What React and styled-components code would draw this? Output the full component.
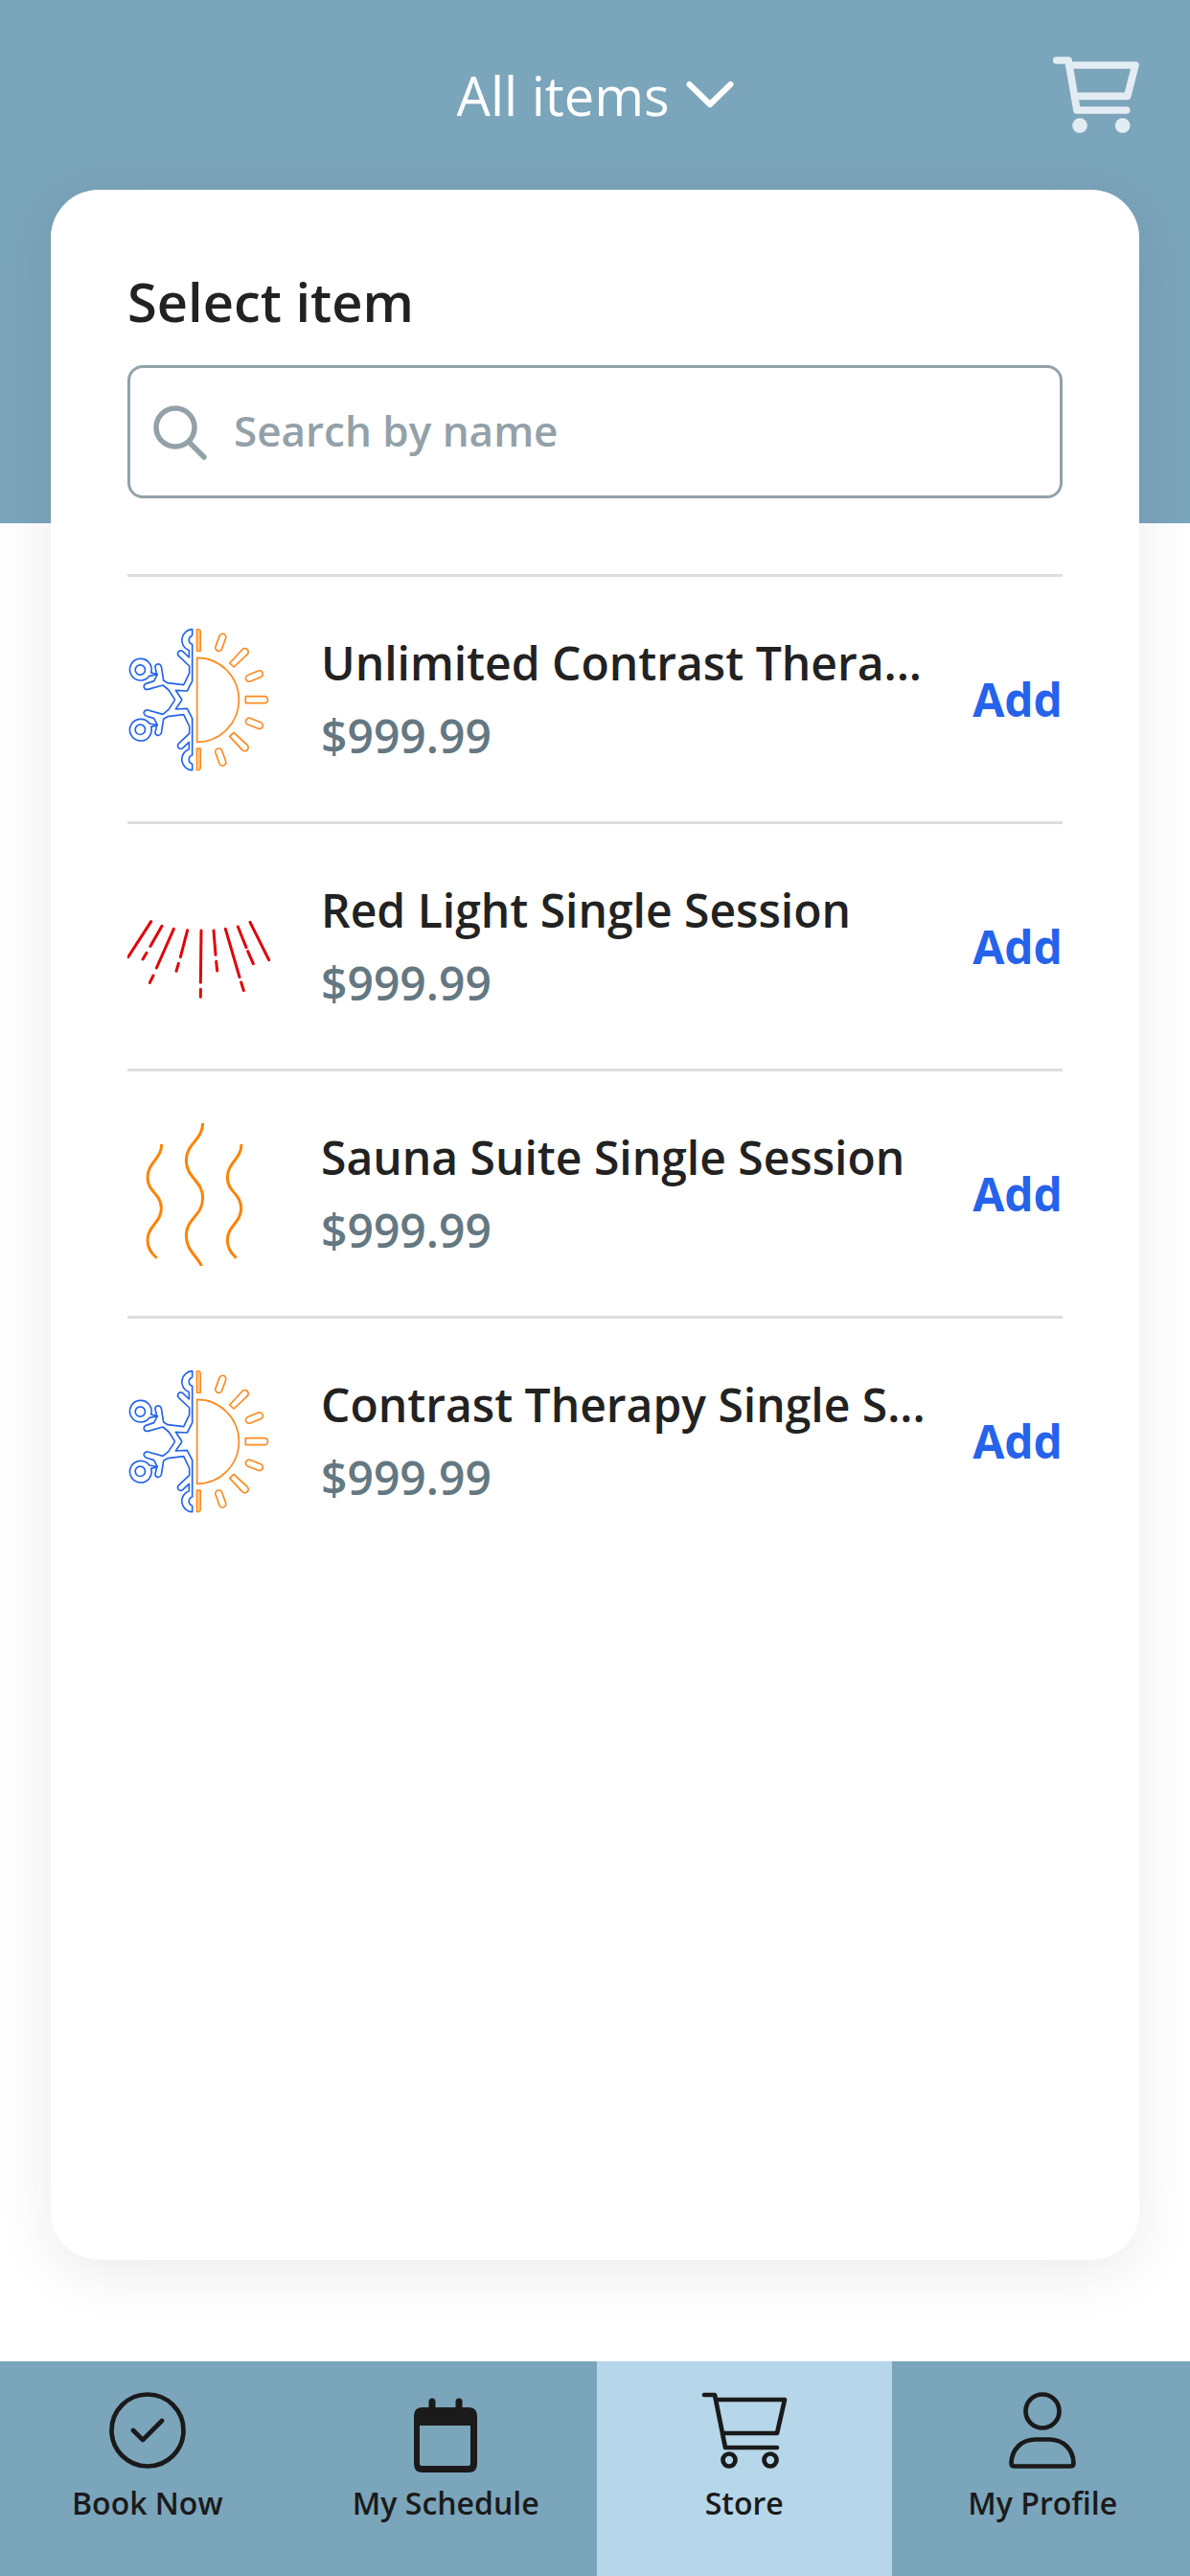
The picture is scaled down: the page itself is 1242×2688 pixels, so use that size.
import React, { useState } from "react";
import styled, { createGlobalStyle, ThemeProvider } from "styled-components";

const theme = {
  colors: {
    brand: "#7ba5bb",
    brandLight: "#b6d6e9",
    text: "#222222",
    icon: "#1a1a1a",
    muted: "#93a1a9",
    price: "#647882",
    link: "#2563eb",
    line: "#dedede"
  }
};

const GlobalStyle = createGlobalStyle`
  * {
    box-sizing: border-box;
  }
  body {
    margin: 0;
    font-family: "Open Sans", "Noto Sans", sans-serif;
    color: #222222;
  }
  button, input, select {
    font: inherit;
    color: inherit;
  }
`;

const Page = styled.div`
  display: flex;
  flex-direction: column;
  min-height: 100vh;
  background: linear-gradient(
    ${({ theme }) => theme.colors.brand} 546px,
    #ffffff 546px
  );
`;

const Header = styled.header`
  display: grid;
  grid-template-columns: 1fr auto 1fr;
  align-items: center;
  height: 198px;
  padding: 0 53px;
`;

const Filter = styled.label`
  grid-column: 2;
  display: flex;
  align-items: center;
  gap: 16px;
  color: #ffffff;
`;

const FilterSelect = styled.select`
  appearance: none;
  padding: 0;
  border: none;
  background: none;
  font-size: 56px;
  line-height: 76px;
  cursor: pointer;

  option {
    color: ${({ theme }) => theme.colors.text};
  }
`;

const CartButton = styled.button`
  justify-self: end;
  display: flex;
  padding: 0;
  border: none;
  background: none;
  color: #e4ecf3;
  cursor: pointer;
`;

const Card = styled.main`
  flex: 1;
  margin: 0 53px 106px;
  padding: 78px 80px;
  border-radius: 50px;
  background: #ffffff;
  box-shadow: 0 12px 60px rgba(30, 30, 60, 0.09);
`;

const Heading = styled.h1`
  margin: 0 0 29px;
  font-size: 56px;
  font-weight: 600;
  line-height: 76px;
`;

const SearchBox = styled.label`
  display: flex;
  align-items: center;
  gap: 28px;
  height: 139px;
  margin-bottom: 79px;
  padding: 0 24px;
  border: 3px solid ${({ theme }) => theme.colors.muted};
  border-radius: 16px;
  color: ${({ theme }) => theme.colors.muted};
`;

const SearchInput = styled.input`
  flex: 1;
  min-width: 0;
  padding: 0 0 4px;
  border: none;
  outline: none;
  background: none;
  color: ${({ theme }) => theme.colors.text};
  font-size: 44px;
  font-weight: 600;
  line-height: 64px;

  &::placeholder {
    color: ${({ theme }) => theme.colors.muted};
    opacity: 1;
  }
`;

const ItemList = styled.ul`
  margin: 0;
  padding: 0;
  list-style: none;
`;

const Item = styled.li`
  display: flex;
  align-items: center;
  height: 258px;
  border-top: 3px solid ${({ theme }) => theme.colors.line};
`;

const ItemIcon = styled.svg`
  flex: none;
  width: 150px;
  height: 150px;
  margin-right: 52px;
  fill: none;
`;

const ItemInfo = styled.div`
  flex: 1;
  min-width: 0;
`;

const ItemName = styled.div`
  overflow: hidden;
  white-space: nowrap;
  text-overflow: ellipsis;
  font-size: 48px;
  font-weight: 600;
  line-height: 76px;
`;

const ItemPrice = styled.div`
  color: ${({ theme }) => theme.colors.price};
  font-size: 48px;
  font-weight: 600;
  line-height: 76px;
`;

const AddButton = styled.button`
  margin-left: 16px;
  padding: 0;
  border: none;
  background: none;
  color: ${({ theme }) => theme.colors.link};
  font-size: 48px;
  font-weight: 700;
  line-height: 76px;
  cursor: pointer;
`;

const Nav = styled.nav`
  display: grid;
  grid-template-columns: repeat(4, 1fr);
  gap: 4px;
  height: 224px;
  background: ${({ theme }) => theme.colors.brand};
`;

const NavLink = styled.a`
  display: flex;
  flex-direction: column;
  align-items: center;
  gap: 10px;
  padding-top: 32px;
  background: ${({ theme, $active }) =>
    $active ? theme.colors.brandLight : "transparent"};
  color: ${({ theme }) => theme.colors.icon};
  font-size: 32px;
  font-weight: 600;
  line-height: 44px;
  text-decoration: none;
`;

const NavIcon = styled.svg`
  width: 90px;
  height: 84px;
  fill: none;
  stroke: currentColor;
  stroke-width: 4.7;
  stroke-linecap: round;
  stroke-linejoin: round;
`;

// the lower half of both drawings is the upper half flipped
const halves = [undefined, "matrix(1 0 0 -1 0 541)"];

const ContrastIcon = () => (
  <ItemIcon viewBox="39 45 450 450" strokeWidth="5" strokeLinejoin="round" aria-hidden="true">
    <g stroke="#2563eb">
      {halves.map((flip, i) => (
        <g key={i} transform={flip}>
          <path d="M242 70V50A34 34 0 0 0 232 116V138L212 119Q204 114 198 121Q194 128 200 134L233 165V187L215 224L165 218L152 210L145 166Q141 157 133 159Q125 161 126 169L131 190L113 186A34 34 0 1 0 108 196L133 191L122 212L97 220Q89 224 91 232Q94 240 103 238L150 225L168 240L188 270.500" />
          <path d="M242 70A14 14 0 0 0 242 97V212L226 243L190 241L210 270.500" />
          <circle cx="79" cy="177" r="15.500" />
        </g>
      ))}
    </g>
    <g stroke="#ff8a1e">
      <path d="M257 139A131 132 0 0 1 257 403Z" />
      <path d="M409 260H468A10 10 0 0 1 468 281H409Z" />
      {halves.map((flip, i) => (
        <g key={i} transform={flip}>
          <path d="M256 50H262Q268 51 268 57V118H256Z" fill="#ffc48a" strokeWidth="4" />
          <rect x="320.500" y="63" width="21" height="56" rx="10.500" transform="rotate(20 331 91)" />
          <path d="M359 156L398 114A11 11 0 0 1 415 128L372 168Z" />
          <rect x="408" y="186" width="56" height="21" rx="10.500" transform="rotate(-22 436 196)" />
        </g>
      ))}
    </g>
  </ItemIcon>
);

const RedLightIcon = () => (
  <ItemIcon viewBox="39 -51 450 450" stroke="#e00008" strokeWidth="9" strokeLinecap="round" aria-hidden="true">
    <path d="M113 95L41 206M147 109L111 172M99 193L87 213M184 118L130 240M120 264L109 286M227 122L205 206M199 226L192 250M270 123L268 286M268 307V331M309 123L315 199M317 220L320 249M346 118L390 269M395 285L403 311M385 111L411 176M416 188L433 227M423 97L482 215" />
  </ItemIcon>
);

const SaunaIcon = () => (
  <ItemIcon viewBox="9 63 450 450" stroke="#ff8205" strokeWidth="9" aria-hidden="true">
    <path d="M245 66C245 119 193 129 193 182C193 238 245 246 245 300C245 356 193 364 193 417C193 464 226 480 241 513" />
    <path d="M116 132C116 177 72 190 72 236C72 282 115 286 115 333C115 377 72 388 72 432C72 460 85 475 101 488" />
    <path d="M366 132C366 177 322 190 322 236C322 282 365 286 365 333C365 377 322 388 322 432C322 460 335 475 350 488" />
  </ItemIcon>
);

const ChevronIcon = () => (
  <svg width="50" height="30" viewBox="0 0 50 30" fill="none" aria-hidden="true">
    <path d="M3.500 4L25 25L46.500 4" stroke="currentColor" strokeWidth="6" strokeLinecap="round" strokeLinejoin="round" />
  </svg>
);

const CartIcon = () => (
  <svg width="90" height="80" viewBox="117 88 270 240" fill="none" aria-hidden="true">
    <path
      d="M128 100H165L192 256H347M167 115H375L350 212H186"
      stroke="currentColor"
      strokeWidth="23"
      strokeLinecap="round"
      strokeLinejoin="round"
    />
    <circle cx="201" cy="304" r="23.500" fill="currentColor" />
    <circle cx="335" cy="304" r="23.500" fill="currentColor" />
  </svg>
);

const SearchIcon = () => (
  <svg width="56" height="58" viewBox="0 0 56 58" fill="none" aria-hidden="true">
    <circle cx="23" cy="24" r="20" stroke="currentColor" strokeWidth="5.500" />
    <path d="M37 39L53 55" stroke="currentColor" strokeWidth="5.500" strokeLinecap="round" />
  </svg>
);

const navItems = [
  {
    label: "Book Now",
    drawing: (
      <>
        <circle cx="45" cy="40" r="37.500" />
        <path d="M30 40L40 50L60 30" />
      </>
    )
  },
  {
    label: "My Schedule",
    drawing: (
      <>
        <path
          d="M21 16H69Q78 16 78 25V75Q78 84 69 84H21Q12 84 12 75V25Q12 16 21 16ZM18 35V75Q18 77 20 77H69Q71 77 71 75V35Z"
          fill="currentColor"
          fillRule="evenodd"
          stroke="none"
        />
        <path d="M31 10V20M59 10V20" strokeWidth="7" />
      </>
    )
  },
  {
    label: "Store",
    active: true,
    drawing: (
      <>
        <path d="M3 3H14L25 58H79M15 8H87L79 43H22" />
        <circle cx="29" cy="71" r="6.500" />
        <circle cx="72" cy="71" r="6.500" />
      </>
    )
  },
  {
    label: "My Profile",
    drawing: (
      <>
        <circle cx="45" cy="20" r="17.500" />
        <path d="M38 49.500H52C67 49.500 77 60 77.500 74Q77.500 77.500 74 77.500H16Q12.500 77.500 12.500 74C13 60 23 49.500 38 49.500Z" />
      </>
    )
  }
];

const items = [
  { name: "Unlimited Contrast Thera...", price: "$999.99", Icon: ContrastIcon },
  { name: "Red Light Single Session", price: "$999.99", Icon: RedLightIcon },
  { name: "Sauna Suite Single Session", price: "$999.99", Icon: SaunaIcon },
  { name: "Contrast Therapy Single S...", price: "$999.99", Icon: ContrastIcon }
];

const App = () => {
  const [search, setSearch] = useState("");

  const visibleItems = items.filter((item) =>
    item.name.toLowerCase().includes(search.toLowerCase())
  );

  return (
    <ThemeProvider theme={theme}>
      <GlobalStyle />
      <Page>
        <Header>
          <Filter>
            <FilterSelect aria-label="Item category">
              <option>All items</option>
            </FilterSelect>
            <ChevronIcon />
          </Filter>
          <CartButton type="button" aria-label="Cart">
            <CartIcon />
          </CartButton>
        </Header>
        <Card>
          <Heading>Select item</Heading>
          <SearchBox>
            <SearchIcon />
            <SearchInput
              type="text"
              aria-label="Search by name"
              placeholder="Search by name"
              value={search}
              onChange={(e) => setSearch(e.target.value)}
            />
          </SearchBox>
          <ItemList>
            {visibleItems.map(({ name, price, Icon }) => (
              <Item key={name}>
                <Icon />
                <ItemInfo>
                  <ItemName>{name}</ItemName>
                  <ItemPrice>{price}</ItemPrice>
                </ItemInfo>
                <AddButton type="button">Add</AddButton>
              </Item>
            ))}
          </ItemList>
        </Card>
        <Nav>
          {navItems.map(({ label, active, drawing }) => (
            <NavLink key={label} href="#" $active={active}>
              <NavIcon viewBox="0 0 90 84" aria-hidden="true">
                {drawing}
              </NavIcon>
              {label}
            </NavLink>
          ))}
        </Nav>
      </Page>
    </ThemeProvider>
  );
};

export default App;
